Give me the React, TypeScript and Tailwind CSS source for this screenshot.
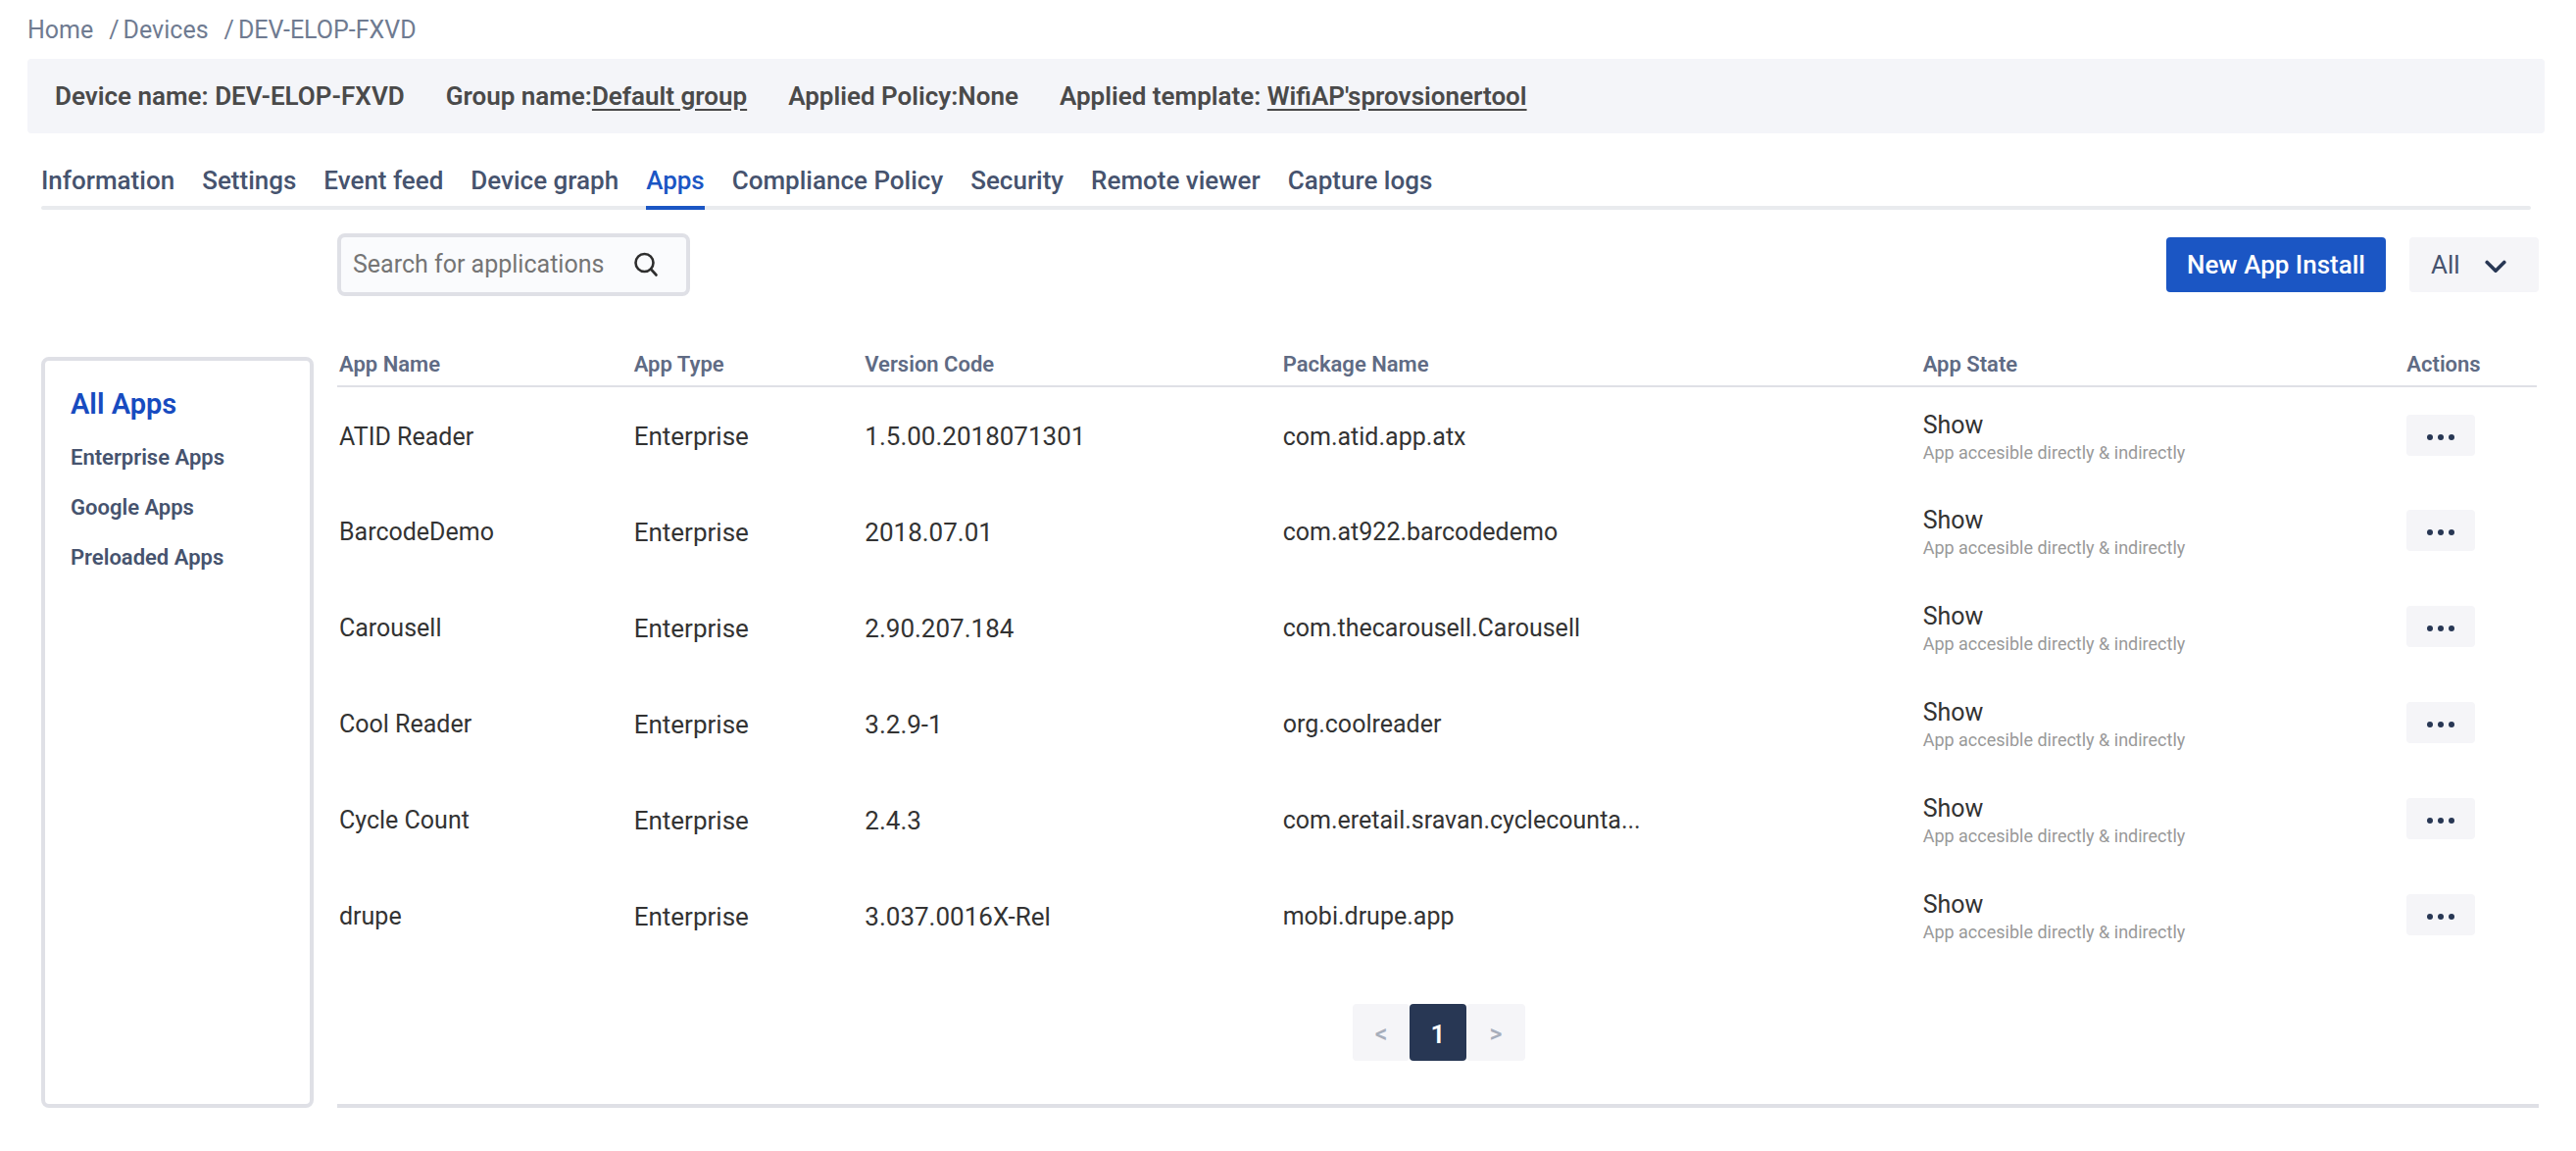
const crumbs = ["Home", "Devices", "DEV-ELOP-FXVD"];

const tabs = [
  "Information",
  "Settings",
  "Event feed",
  "Device graph",
  "Apps",
  "Compliance Policy",
  "Security",
  "Remote viewer",
  "Capture logs",
];

const categories = ["Enterprise Apps", "Google Apps", "Preloaded Apps"];

const apps = [
  { name: "ATID Reader", version: "1.5.00.2018071301", pkg: "com.atid.app.atx" },
  { name: "BarcodeDemo", version: "2018.07.01", pkg: "com.at922.barcodedemo" },
  { name: "Carousell", version: "2.90.207.184", pkg: "com.thecarousell.Carousell" },
  { name: "Cool Reader", version: "3.2.9-1", pkg: "org.coolreader" },
  { name: "Cycle Count", version: "2.4.3", pkg: "com.eretail.sravan.cyclecounta..." },
  { name: "drupe", version: "3.037.0016X-Rel", pkg: "mobi.drupe.app" },
];

function Breadcrumb() {
  return (
    <nav aria-label="Breadcrumb" className="px-7 pt-4 text-[25px] leading-[30px] text-[#6f7b91]">
      <ol className="flex">
        {crumbs.map((c, i) => (
          <li key={c} className="flex">
            {i > 0 && <span className="pr-1 pl-4">/</span>}
            <a href="#">{c}</a>
          </li>
        ))}
      </ol>
    </nav>
  );
}

function DeviceBar() {
  return (
    <section className="mt-[14px] mr-8 ml-7 flex h-[76px] items-center gap-[42px] rounded bg-[#f4f5f9] px-7 text-[26px] font-semibold text-[#4a4a4a]">
      <p>Device name: DEV-ELOP-FXVD</p>
      <p>
        Group name:
        <a href="#" className="underline underline-offset-4">Default group</a>
      </p>
      <p>Applied Policy:None</p>
      <p>
        Applied template:{" "}
        <a href="#" className="underline underline-offset-4">WifiAP'sprovsionertool</a>
      </p>
    </section>
  );
}

function Tabs() {
  return (
    <nav className="relative mr-[46px] ml-[42px] flex gap-7 pt-8 text-[26px] leading-8 font-medium text-[#46536e]">
      <div className="absolute inset-x-0 bottom-0 h-1 rounded-full bg-[#e9ebee]" />
      {tabs.map((t) =>
        t === "Apps" ? (
          <a key={t} href="#" aria-current="page" className="relative border-b-4 border-[#1b56c4] pb-[10px] text-[#1b56c4]">
            {t}
          </a>
        ) : (
          <a key={t} href="#" className="relative pb-[14px]">{t}</a>
        ),
      )}
    </nav>
  );
}

function Toolbar() {
  return (
    <div className="mr-[38px] ml-[344px] flex items-center justify-between pt-6">
      <label className="flex h-16 w-[360px] items-center rounded-lg border-4 border-[#dfe0e6] bg-[#fafbfd] pl-3">
        <input
          type="text"
          aria-label="Search for applications"
          placeholder="Search for applications"
          className="w-[286px] bg-transparent text-[25px] outline-none placeholder:text-[#757575]"
        />
        <svg viewBox="0 0 26 26" className="h-[26px] w-[26px]" fill="none" stroke="#2e2e2e" strokeWidth="2.6" strokeLinecap="round">
          <circle cx="11.5" cy="11" r="9" />
          <path d="M18 17.5 23.5 23.5" />
        </svg>
      </label>
      <div className="flex gap-6">
        <button type="button" className="h-14 w-56 rounded bg-[#1b56c4] text-[26px] font-medium text-white">
          New App Install
        </button>
        <div className="relative">
          <select aria-label="Filter apps" className="h-14 w-[132px] appearance-none rounded bg-[#f5f5f8] pl-[22px] text-[26px] text-[#46536e]">
            <option>All</option>
          </select>
          <svg viewBox="0 0 22 14" className="pointer-events-none absolute top-[23px] right-[33px] h-[14px] w-[22px]" fill="none" stroke="#283754" strokeWidth="3.6" strokeLinecap="round" strokeLinejoin="round">
            <path d="M2.2 2.4 11 11.2 19.8 2.4" />
          </svg>
        </div>
      </div>
    </div>
  );
}

function Sidebar() {
  return (
    <aside className="w-[278px] shrink-0 rounded-lg border-4 border-[#dfe0e6] px-[26px] pt-[25px]">
      <a href="#" className="block text-[29px] leading-[38px] font-semibold text-[#174bc0]">All Apps</a>
      <ul className="mt-[10px] text-[22px] leading-[51px] font-semibold text-[#46536e]">
        {categories.map((c) => (
          <li key={c}>
            <a href="#">{c}</a>
          </li>
        ))}
      </ul>
    </aside>
  );
}

function AppsTable() {
  return (
    <table className="mr-[2px] w-[calc(100%-2px)] table-fixed border-collapse text-left text-[#333333]">
      <colgroup>
        <col className="w-[13.4%]" />
        <col className="w-[10.5%]" />
        <col className="w-[19%]" />
        <col className="w-[29.1%]" />
        <col className="w-[22%]" />
        <col className="w-[6%]" />
      </colgroup>
      <thead>
        <tr className="h-9 border-b-2 border-[#dfe0e6] text-[22px] leading-6 text-[#5f6b84]">
          {["App Name", "App Type", "Version Code", "Package Name", "App State", "Actions"].map((h) => (
            <th key={h} scope="col" className="pt-0 pb-2 pl-[2px] font-semibold">{h}</th>
          ))}
        </tr>
      </thead>
      <tbody>
        {apps.map((a) => (
          <tr key={a.name} className="h-[98px] text-[25px]">
            <td className="pt-1 pl-[2px]">{a.name}</td>
            <td className="pt-1 pl-[2px] text-[26px]">Enterprise</td>
            <td className="pt-1 pl-[2px] text-[26px]">{a.version}</td>
            <td className="pt-1 pl-[2px]">{a.pkg}</td>
            <td className="pt-2 pl-[2px]">
              <div className="leading-7">Show</div>
              <div className="text-[18px] leading-7 text-[#999999]">App accesible directly &amp; indirectly</div>
            </td>
            <td className="pl-[2px]">
              <button type="button" aria-label={`Actions for ${a.name}`} className="flex h-[42px] w-[70px] items-center justify-center rounded bg-[#f5f5f8] pt-1">
                <svg viewBox="0 0 28 6" className="h-[6px] w-7" fill="#283754">
                  <circle cx="3" cy="3" r="3" />
                  <circle cx="14" cy="3" r="3" />
                  <circle cx="25" cy="3" r="3" />
                </svg>
              </button>
            </td>
          </tr>
        ))}
      </tbody>
    </table>
  );
}

function Pagination() {
  return (
    <nav aria-label="Pagination" className="mt-[42px] flex justify-center pl-[2px] text-[25px] font-medium text-[#a7aebb]">
      <button type="button" aria-label="Previous page" className="h-[58px] w-[58px] rounded bg-[#f5f5f8] pt-1">&lt;</button>
      <button type="button" aria-current="page" className="h-[58px] w-[58px] rounded bg-[#283754] pt-1 text-[26px] font-semibold text-white">1</button>
      <button type="button" aria-label="Next page" className="h-[58px] w-[60px] rounded bg-[#f5f5f8] pt-1">&gt;</button>
    </nav>
  );
}

export default function App() {
  return (
    <div className="bg-white font-['Roboto',sans-serif]">
      <Breadcrumb />
      <DeviceBar />
      <Tabs />
      <Toolbar />
      <div className="mt-14 mr-[38px] ml-[42px] flex gap-6 pb-[42px]">
        <div className="flex pt-[6px]">
          <Sidebar />
        </div>
        <main className="min-w-0 flex-1 border-b-4 border-[#dfe0e6] pb-[44px]">
          <AppsTable />
          <Pagination />
        </main>
      </div>
    </div>
  );
}
